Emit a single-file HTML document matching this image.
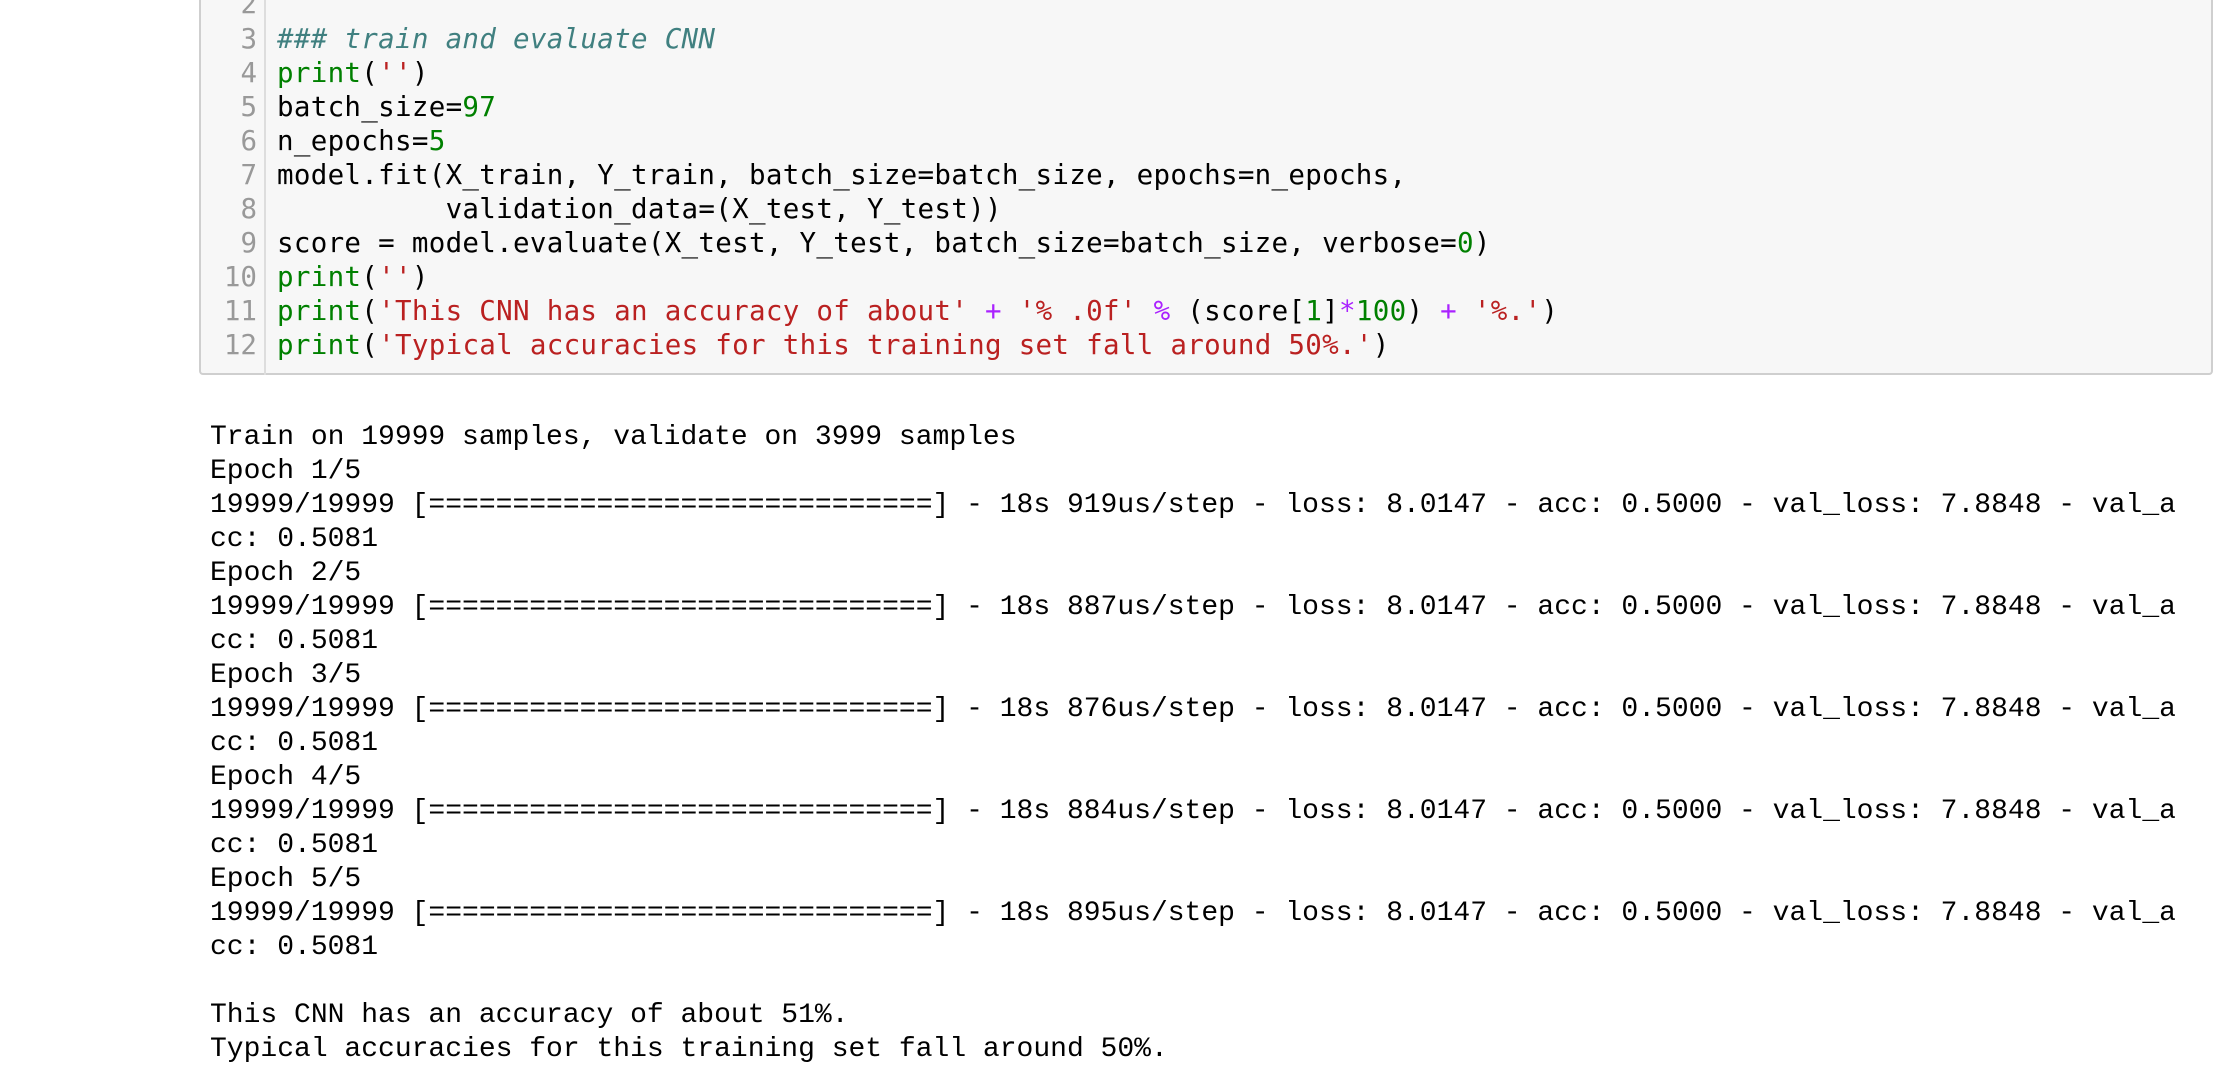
<!DOCTYPE html>
<html><head><meta charset="utf-8"><style>
html,body{margin:0;padding:0;background:#fff;width:2238px;height:1084px;overflow:hidden;position:relative}
.cell{position:absolute;left:199px;top:-10px;width:2014px;height:385px;background:#f7f7f7;border:2px solid #cfcfcf;border-top:none;border-radius:0 0 4px 4px;box-sizing:border-box}
.gut{position:absolute;left:199px;top:-10px;width:67px;height:385px;border-right:2px solid #ddd;box-sizing:border-box}
pre{margin:0;position:absolute;white-space:pre}
.nums{left:200px;width:57px;text-align:right;top:-12.6px;font:27.5px/34.1px "DejaVu Sans Mono",monospace;color:#999}
.code{left:277px;top:-12.6px;font:27.5px/34.1px "DejaVu Sans Mono",monospace;color:#000;letter-spacing:0.3px}
.k{color:#008000}.s{color:#ba2121}.n{color:#008000}.c{color:#408080;font-style:italic}.o{color:#aa22ff}
.out{left:210px;top:421px;font:28px/34px "Liberation Mono","Courier New",monospace;color:#000}
.out2{left:210px;top:999px;font:28px/34px "Liberation Mono","Courier New",monospace;color:#000}
</style></head><body>
<div class="cell"></div><div class="gut"></div>
<pre class="nums">2
3
4
5
6
7
8
9
10
11
12</pre>
<pre class="code">&nbsp;
<span class="c">### train and evaluate CNN</span>
<span class="k">print</span>(<span class="s">''</span>)
batch_size=<span class="n">97</span>
n_epochs=<span class="n">5</span>
model.fit(X_train, Y_train, batch_size=batch_size, epochs=n_epochs,
          validation_data=(X_test, Y_test))
score = model.evaluate(X_test, Y_test, batch_size=batch_size, verbose=<span class="n">0</span>)
<span class="k">print</span>(<span class="s">''</span>)
<span class="k">print</span>(<span class="s">'This CNN has an accuracy of about'</span> <span class="o">+</span> <span class="s">'% .0f'</span> <span class="o">%</span> (score[<span class="n">1</span>]<span class="o">*</span><span class="n">100</span>) <span class="o">+</span> <span class="s">'%.'</span>)
<span class="k">print</span>(<span class="s">'Typical accuracies for this training set fall around 50%.'</span>)</pre>
<pre class="out">Train on 19999 samples, validate on 3999 samples
Epoch 1/5
19999/19999 [==============================] - 18s 919us/step - loss: 8.0147 - acc: 0.5000 - val_loss: 7.8848 - val_a
cc: 0.5081
Epoch 2/5
19999/19999 [==============================] - 18s 887us/step - loss: 8.0147 - acc: 0.5000 - val_loss: 7.8848 - val_a
cc: 0.5081
Epoch 3/5
19999/19999 [==============================] - 18s 876us/step - loss: 8.0147 - acc: 0.5000 - val_loss: 7.8848 - val_a
cc: 0.5081
Epoch 4/5
19999/19999 [==============================] - 18s 884us/step - loss: 8.0147 - acc: 0.5000 - val_loss: 7.8848 - val_a
cc: 0.5081
Epoch 5/5
19999/19999 [==============================] - 18s 895us/step - loss: 8.0147 - acc: 0.5000 - val_loss: 7.8848 - val_a
cc: 0.5081</pre>
<pre class="out2">This CNN has an accuracy of about 51%.
Typical accuracies for this training set fall around 50%.</pre>
</body></html>
